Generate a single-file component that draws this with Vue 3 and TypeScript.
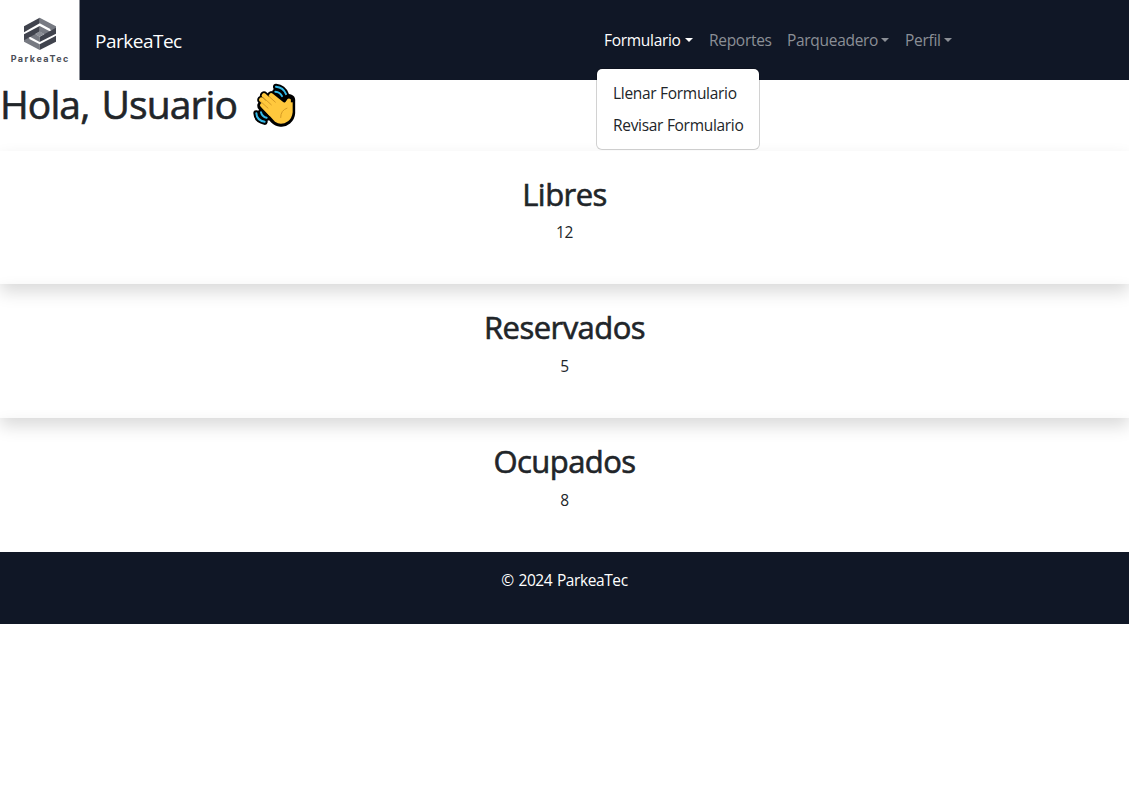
<script setup lang="ts">
import { ref } from 'vue'

interface NavItem {
  label: string
  key: string
  caret: boolean
  children?: string[]
}
interface Card {
  title: string
  key: string
  value: number
}

const openMenu = ref<string>('formulario')
const navItems: NavItem[] = [
  { label: 'Formulario', key: 'formulario', caret: true, children: ['Llenar Formulario', 'Revisar Formulario'] },
  { label: 'Reportes', key: 'reportes', caret: false },
  { label: 'Parqueadero', key: 'parqueadero', caret: true },
  { label: 'Perfil', key: 'perfil', caret: true },
]
const cards: Card[] = [
  { title: 'Libres', key: 'libres', value: 12 },
  { title: 'Reservados', key: 'reservados', value: 5 },
  { title: 'Ocupados', key: 'ocupados', value: 8 },
]
</script>

<template>
  <div class="page">
    <nav class="navbar">
      <svg class="logo" viewBox="0 0 240 240" aria-label="ParkeaTec">
        <rect width="240" height="240" fill="#fff" />
        <rect x="237" width="3" height="240" fill="#8b8e96" />
        <path d="M119 53 L168 79 V98 L151 90 V87 L119 70 Z" fill="#777a82" />
        <path d="M72 79 L119 53 V70 L72 97 Z" fill="#40434d" />
        <path d="M72 106 L88 114 V117 L119 133 V150 L72 125 Z" fill="#777a82" />
        <path d="M168 107 V125 L119 150 V133 Z" fill="#40434d" />
        <path d="M119 78 L152 95 L136 104 L119 95 Z" fill="#777a82" />
        <path d="M87 109 L103 100 L119 110 V126 Z" fill="#777a82" />
        <path d="M72 103 L119 78 V95 L72 121 Z" fill="#40434d" />
        <path d="M119 110 L168 83 V101 L119 126 Z" fill="#40434d" />
        <path d="M119 94 L133 102 L119 110 L105 102 Z" fill="#8b8e95" />
        <text x="32" y="187" textLength="173" font-family="Inter, sans-serif" font-size="27" font-weight="700" fill="#4b4e57">ParkeaTec</text>
      </svg>
      <span class="brand">ParkeaTec</span>
      <ul class="menu">
        <li v-for="item in navItems" :key="item.key" :class="['item', item.key]">
          <a :class="['link', { active: openMenu === item.key }]">
            <span>{{ item.label }}</span><i v-if="item.caret" class="caret"></i>
          </a>
          <div v-if="item.children && openMenu === item.key" class="dropdown">
            <a v-for="child in item.children" :key="child" class="option">{{ child }}</a>
          </div>
        </li>
      </ul>
    </nav>

    <h1 class="greeting">
      <span>Hola, Usuario</span>
      <svg class="wave" viewBox="50 20 135 140" aria-hidden="true">
        <g fill="none" stroke="#000" stroke-linecap="round" stroke-linejoin="round">
          <path d="M122 34 Q144 36 152 58 M120 49 Q134 50 140 66 M63 113 Q64 134 88 139 M77 110 Q80 123 94 127" stroke-width="18" />
          <path d="M81 89 L106 112 M78 73 L114 103 M86 60 L124 94 M108 60 L140 86" stroke-width="25" />
        </g>
        <path d="M101 62 Q107 51 116 57 L141 79 Q146 76 151 67 Q160 58 170 66 Q174 69 173 80 V113 Q172 129 160 139 Q148 149 135 147 Q122 146 113 137 L76 99 Q68 91 77 83 Z" fill="#ffc83d" stroke="#000" stroke-width="13" stroke-linejoin="round" />
        <g fill="none" stroke-linecap="round" stroke-linejoin="round">
          <path d="M122 34 Q144 36 152 56 M120 49 Q134 50 140 62 M63 113 Q64 134 88 139 M77 110 Q80 123 94 127" stroke="#35b9e8" stroke-width="6" />
          <path d="M81 89 L106 114 M78 73 L114 106 M86 60 L124 96 M108 60 L143 88" stroke="#ffc83d" stroke-width="14" />
          <path d="M101 62 L141 82 L172 80 V110 Q170 128 158 137 Q138 151 119 139 L80 96 Z" fill="#ffc83d" stroke="none" />
          <path d="M76 78 L98 98 M84 66 L108 88 M100 62 L120 80 M155 98 Q136 104 136 126" stroke="#d69b25" stroke-width="3" />
        </g>
      </svg>
    </h1>

    <main>
      <section v-for="card in cards" :key="card.key" class="card">
        <h2 :class="card.key">{{ card.title }}</h2>
        <p>{{ card.value }}</p>
      </section>
    </main>

    <footer class="footer"><span>© 2024 ParkeaTec</span></footer>
  </div>
</template>

<style>
body {
  margin: 0;
  background: #fff;
}
</style>

<style scoped>
.page {
  font-family: 'Open Sans', 'Noto Sans', sans-serif;
  font-size: 15.5px;
  line-height: 24px;
  letter-spacing: -0.3px;
  color: #212529;
}
.navbar {
  display: flex;
  align-items: center;
  height: 80px;
  background: #101726;
}
.logo {
  width: 80px;
  height: 80px;
  letter-spacing: 0;
}
.brand {
  width: 501px;
  padding: 2px 0 0 15px;
  font-size: 19px;
  line-height: 30px;
  letter-spacing: -0.5px;
  color: #fff;
}
.menu {
  display: flex;
  margin: 0;
  padding: 0;
  list-style: none;
}
.item {
  position: relative;
  width: 105px;
  white-space: nowrap;
}
.item.reportes {
  width: 78px;
}
.item.parqueadero {
  width: 118px;
}
.item.perfil {
  width: 63px;
}
.link {
  display: flex;
  align-items: center;
  justify-content: space-between;
  padding: 8px;
  color: #8b8f96;
}
.link.active {
  color: #fff;
}
.caret {
  border-top: 4.8px solid currentColor;
  border-left: 4.8px solid transparent;
  border-right: 4.8px solid transparent;
}
.dropdown {
  position: absolute;
  top: 48px;
  left: 0;
  z-index: 10;
  box-sizing: border-box;
  width: 164px;
  height: 82px;
  padding: 8px 0;
  background: #fff;
  background-clip: padding-box;
  border: 1px solid rgba(0, 0, 0, 0.175);
  border-radius: 6px;
}
.option {
  display: block;
  padding: 4px 16px;
  color: #212529;
}
.greeting {
  display: flex;
  align-items: center;
  height: 48px;
  margin: 0 0 22.6px;
  font-size: 39px;
  line-height: 48px;
  font-weight: 500;
  letter-spacing: -0.9px;
  word-spacing: 3px;
  -webkit-text-stroke: 0.6px currentColor;
}
.greeting span {
  width: 251.5px;
  white-space: nowrap;
}
.wave {
  width: 45px;
  height: 47px;
  margin-top: 3px;
}
.card {
  box-sizing: border-box;
  height: 133.7px;
  padding-top: 24px;
  text-align: center;
  box-shadow: 0 8px 16px rgba(0, 0, 0, 0.15);
}
h2 {
  margin: 0 0 7.6px;
  font-size: 31px;
  line-height: 38px;
  font-weight: 500;
  letter-spacing: -0.55px;
  -webkit-text-stroke: 0.6px currentColor;
}
p {
  margin: 0;
}
.footer {
  position: relative;
  box-sizing: border-box;
  height: 72px;
  padding-top: 16px;
  text-align: center;
  letter-spacing: -0.4px;
  word-spacing: 1px;
  color: #fff;
  background: #101726;
}
</style>
